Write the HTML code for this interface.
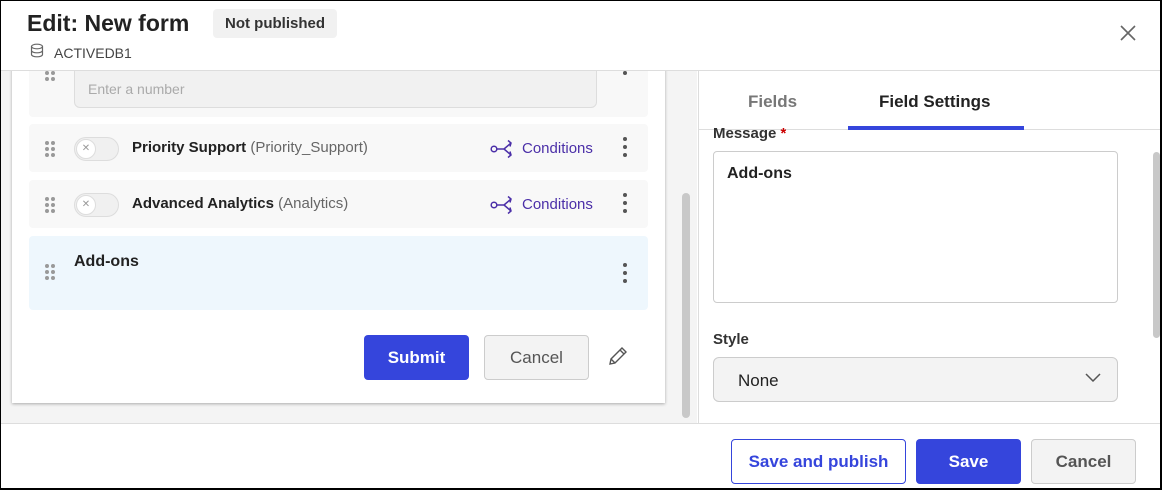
<!DOCTYPE html>
<html><head><meta charset="utf-8"><style>
*{box-sizing:border-box;margin:0;padding:0}
body{width:1162px;height:490px;overflow:hidden;font-family:"Liberation Sans",Arial,sans-serif;color:#222;background:#fff}
.frame{position:absolute;left:0;top:0;width:1162px;height:490px;border:1px solid #000;border-right-width:2px;border-bottom-width:2px}
.abs{position:absolute}
.hdr{left:1px;top:1px;width:1159px;height:70px;border-bottom:1px solid #ddd;background:#fff}
.left{left:1px;top:71px;width:696px;height:352px;background:#f4f4f4;overflow:hidden}
.card{left:11px;top:-10px;width:653px;height:342px;background:#fff;box-shadow:0 1px 3px rgba(0,0,0,.3)}
.row{position:absolute;left:17px;width:619px;background:#f8f8f8;border-radius:4px}
.grip{position:absolute;width:10px;height:14px}
.grip i{position:absolute;width:4px;height:4px;border-radius:50%;background:#999}
.kebab{position:absolute;width:4px}
.kebab i{position:absolute;left:0;width:4px;height:4px;border-radius:50%;background:#555}
.tog{position:absolute;width:45px;height:24px;border:1px solid #ddd;border-radius:12px;background:#f0f0f0}
.tog b{position:absolute;left:1px;top:1px;width:20px;height:20px;border-radius:50%;background:#fff;border:1px solid #ddd;font-size:10px;color:#999;text-align:center;line-height:18px;font-weight:normal}
.cond{position:absolute;color:#4b2fa8;font-size:15px}
.cond svg{position:absolute;left:-32px;top:-2px}
.right{left:698px;top:71px;width:462px;height:352px;background:#fff;border-left:1px solid #ddd}
.btn{position:absolute;border-radius:4px;font-size:17px;font-weight:bold;text-align:center}
</style></head><body>
<div class="abs hdr">
 <div class="abs" style="left:26px;top:9px;font-size:23px;font-weight:bold;color:#222">Edit: New form</div>
 <div class="abs" style="left:212px;top:8px;width:124px;height:29px;background:#f1f1f1;border-radius:4px;font-size:15px;font-weight:bold;text-align:center;line-height:29px;color:#333">Not published</div>
 <svg class="abs" style="left:29px;top:42px" width="14" height="15" viewBox="0 0 14 15" fill="none" stroke="#666" stroke-width="1.2"><ellipse cx="7" cy="3.5" rx="5.5" ry="2.3"/><path d="M1.5 3.5v8c0 1.3 2.5 2.3 5.5 2.3s5.5-1 5.5-2.3v-8M1.5 7.5c0 1.3 2.5 2.3 5.5 2.3s5.5-1 5.5-2.3"/></svg>
 <div class="abs" style="left:53px;top:44px;font-size:14px;color:#444">ACTIVEDB1</div>
 <svg class="abs" style="left:1119px;top:24px" width="16" height="16" viewBox="0 0 16 16" stroke="#666" stroke-width="1.6"><path d="M1 1L15 15M15 1L1 15"/></svg>
</div>
<div class="abs left">
 <div class="abs card">
  <div class="row" style="top:0;height:56px">
   <div class="grip" style="left:16px;top:10px"><i style="left:0;top:0"></i><i style="left:6px;top:0"></i><i style="left:0;top:6px"></i><i style="left:6px;top:6px"></i></div>
   <div class="abs" style="left:45px;top:0;width:523px;height:47px;background:#f1f1f1;border:1px solid #ddd;border-radius:0 0 6px 6px;font-size:14px;color:#aaa;padding:19px 0 0 13px">Enter a number</div>
   <div class="kebab" style="left:594px;top:2px"><i style="top:0"></i><i style="top:8px"></i></div>
  </div>
  <div class="row" style="top:63px;height:48px">
   <div class="grip" style="left:16px;top:17px"><i style="left:0;top:0"></i><i style="left:6px;top:0"></i><i style="left:0;top:6px"></i><i style="left:6px;top:6px"></i><i style="left:0;top:12px"></i><i style="left:6px;top:12px"></i></div>
   <div class="tog" style="left:45px;top:13px"><b>✕</b></div>
   <div class="abs" style="left:103px;top:15px;font-size:15px"><b>Priority Support</b> <span style="color:#666">(Priority_Support)</span></div>
   <div class="cond" style="left:493px;top:16px"><svg width="30" height="22" viewBox="0 0 30 22" fill="none" stroke="#4b2fa8" stroke-width="1.5"><circle cx="4" cy="11" r="2.8"/><path d="M7 11h7M14 11l7-6M14 11l7 6M18 2.5l3 2.5-1 3.5M18 19.5l3-2.5-1-3.5"/></svg>Conditions</div>
   <div class="kebab" style="left:594px;top:13px"><i style="top:0"></i><i style="top:8px"></i><i style="top:16px"></i></div>
  </div>
  <div class="row" style="top:119px;height:48px">
   <div class="grip" style="left:16px;top:17px"><i style="left:0;top:0"></i><i style="left:6px;top:0"></i><i style="left:0;top:6px"></i><i style="left:6px;top:6px"></i><i style="left:0;top:12px"></i><i style="left:6px;top:12px"></i></div>
   <div class="tog" style="left:45px;top:13px"><b>✕</b></div>
   <div class="abs" style="left:103px;top:15px;font-size:15px"><b>Advanced Analytics</b> <span style="color:#666">(Analytics)</span></div>
   <div class="cond" style="left:493px;top:16px"><svg width="30" height="22" viewBox="0 0 30 22" fill="none" stroke="#4b2fa8" stroke-width="1.5"><circle cx="4" cy="11" r="2.8"/><path d="M7 11h7M14 11l7-6M14 11l7 6M18 2.5l3 2.5-1 3.5M18 19.5l3-2.5-1-3.5"/></svg>Conditions</div>
   <div class="kebab" style="left:594px;top:13px"><i style="top:0"></i><i style="top:8px"></i><i style="top:16px"></i></div>
  </div>
  <div class="row" style="top:175px;height:74px;background:#eef7fd">
   <div class="grip" style="left:16px;top:28px"><i style="left:0;top:0"></i><i style="left:6px;top:0"></i><i style="left:0;top:6px"></i><i style="left:6px;top:6px"></i><i style="left:0;top:12px"></i><i style="left:6px;top:12px"></i></div>
   <div class="abs" style="left:45px;top:17px;font-size:16px;font-weight:bold">Add-ons</div>
   <div class="kebab" style="left:594px;top:27px"><i style="top:0"></i><i style="top:8px"></i><i style="top:16px"></i></div>
  </div>
  <div class="btn" style="left:352px;top:274px;width:105px;height:45px;background:#3545dc;color:#fff;line-height:45px">Submit</div>
  <div class="btn" style="left:472px;top:274px;width:105px;height:45px;background:#f3f3f3;border:1px solid #ccc;color:#555;font-weight:normal;line-height:43px">Cancel</div>
  <svg class="abs" style="left:596px;top:285px" width="20" height="20" viewBox="0 0 20 20" fill="none" stroke="#555" stroke-width="1.4"><path d="M2 18l1-5L14 2l4 4L7 17zM12 4l4 4M3 13l4 4"/></svg>
 </div>
 <div class="abs" style="left:681px;top:122px;width:8px;height:225px;background:#c8c8c8;border-radius:4px"></div>
</div>
<div class="abs right">
 <div class="abs" style="left:0;top:0;width:462px;height:59px;border-bottom:1px solid #ddd"></div>
 <div class="abs" style="left:49px;top:21px;font-size:17px;font-weight:bold;color:#777">Fields</div>
 <div class="abs" style="left:180px;top:21px;font-size:17px;font-weight:bold;color:#222">Field Settings</div>
 <div class="abs" style="left:149px;top:55px;width:176px;height:4px;background:#3545dc"></div>
 <div class="abs" style="left:14px;top:56px;font-size:15px;font-weight:bold;color:#333;height:14px;overflow:hidden;line-height:14px;padding-top:0">Message <span style="color:#c00">*</span></div>
 <div class="abs" style="left:14px;top:80px;width:405px;height:152px;border:1px solid #ccc;border-radius:4px;font-size:16px;font-weight:bold;padding:13px 13px">Add-ons</div>
 <div class="abs" style="left:14px;top:260px;font-size:15px;font-weight:bold;color:#333">Style</div>
 <div class="abs" style="left:14px;top:286px;width:405px;height:45px;border:1px solid #ccc;border-radius:6px;background:#f3f3f3;font-size:17px;padding:13px 24px;color:#222">None</div>
 <svg class="abs" style="left:386px;top:302px" width="16" height="10" viewBox="0 0 16 10" fill="none" stroke="#555" stroke-width="1.5"><path d="M1 1l7 7 7-7"/></svg>
 <div class="abs" style="left:454px;top:81px;width:7px;height:186px;background:#c8c8c8;border-radius:4px"></div>
</div>
<div class="abs" style="left:1px;top:423px;width:1159px;height:1px;background:#ddd"></div>
<div class="btn" style="left:731px;top:439px;width:175px;height:45px;border:1px solid #3545dc;color:#3545dc;background:#fff;line-height:43px">Save and publish</div>
<div class="btn" style="left:916px;top:439px;width:105px;height:45px;background:#3545dc;color:#fff;line-height:45px">Save</div>
<div class="btn" style="left:1031px;top:439px;width:105px;height:45px;background:#f3f3f3;border:1px solid #ccc;color:#555;line-height:43px">Cancel</div>
<div class="frame"></div>
</body></html>
